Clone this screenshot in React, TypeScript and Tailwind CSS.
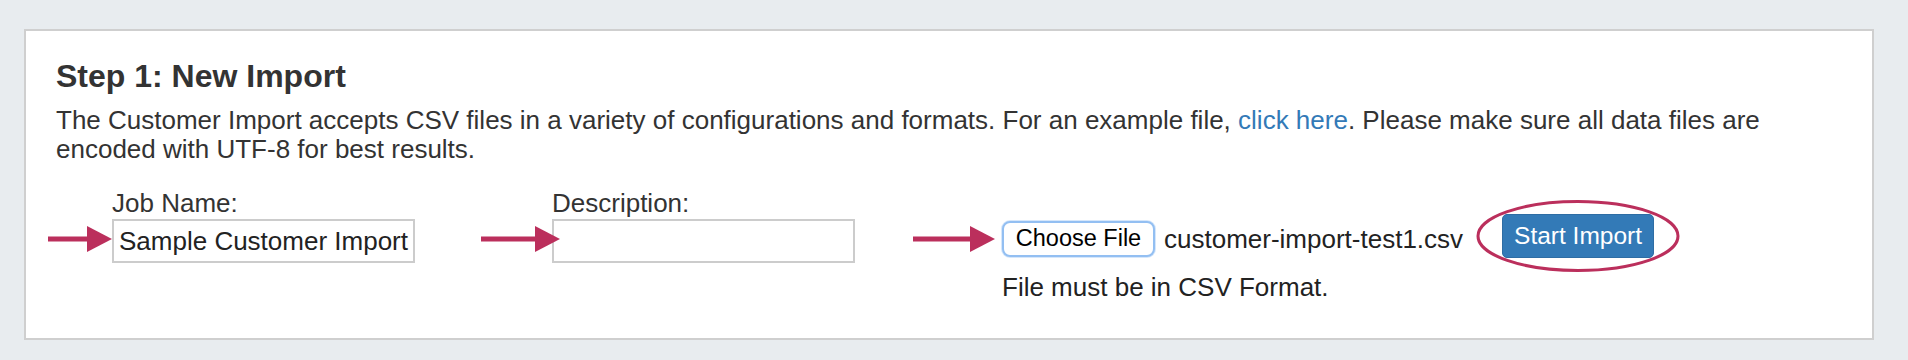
import React from 'react';

const ARROW = '#bb2f5c';

// Hand-drawn style annotation arrow pointing right
function Arrow({ width, className = '' }: { width: number; className?: string }) {
  return (
    <svg
      width={width}
      height={26}
      viewBox={`0 0 ${width} 26`}
      className={`relative z-10 shrink-0 ${className}`}
    >
      <rect x={0} y={10.5} width={width - 22} height={5} fill={ARROW} />
      <polygon points={`${width - 25},0 ${width},13 ${width - 25},26`} fill={ARROW} />
    </svg>
  );
}

export default function App() {
  return (
    <div
      className="h-[360px] w-full overflow-hidden bg-[#e8ecef] pt-[29px] pl-[24px] text-[#333333]"
      style={{ fontFamily: '"Liberation Sans", Arial, Helvetica, sans-serif' }}
    >
      <div className="h-[311px] w-[1850px] border-2 border-[#cfcfcf] bg-white pt-[28px] pl-[30px] pr-[30px]">
        <h2 className="text-[32px] font-bold leading-[35px]">Step 1: New Import</h2>
        <p className="mt-[12px] text-[26px] leading-[29px]">
          The Customer Import accepts CSV files in a variety of configurations and formats. For an example file,{' '}
          <a href="#" className="text-[#337ab7]">click here</a>. Please make sure all data files are encoded with
          UTF-8 for best results.
        </p>

        {/* form row */}
        <div className="-ml-2 mt-[25px] flex items-start">
          {/* job name */}
          <div className="flex items-end">
            <Arrow width={64} className="mb-[11px]" />
            <div className="flex flex-col">
              <label className="text-[26px] leading-[29px]">Job Name:</label>
              <div className="mt-px flex h-[44px] w-[303px] items-center overflow-hidden whitespace-nowrap border-2 border-[#cccccc] pl-[5px] text-[26px] leading-[29px] text-[#222]">
                Sample Customer Import
              </div>
            </div>
          </div>

          {/* description */}
          <div className="ml-[66px] flex items-end">
            <Arrow width={79} className="-mr-2 mb-[11px]" />
            <div className="flex flex-col">
              <label className="text-[26px] leading-[29px]">Description:</label>
              <div className="mt-px h-[44px] w-[303px] border-2 border-[#cccccc]" />
            </div>
          </div>

          {/* file upload */}
          <div className="ml-[58px] mt-[25px] flex flex-col">
            <div className="flex items-start">
              <Arrow width={82} className="mt-[12px]" />
              <button className="ml-[7px] mt-[7px] flex h-[36px] w-[153px] items-center justify-center rounded-[8px] border-2 border-[#93bff2] bg-white text-[23.5px] text-black shadow-[0_0_0_1px_#d6e7fb]">
                Choose File
              </button>
              <span className="ml-[9px] mt-[11px] whitespace-nowrap text-[26px] leading-[29px] text-[#222]">
                customer-import-test1.csv
              </span>
              <div className="relative ml-[39px]">
                <button className="flex h-[44px] w-[152px] items-center justify-center rounded-[5px] border border-[#2e6da4] bg-[#337ab7] text-[24.5px] text-white">
                  Start Import
                </button>
                <svg
                  width={204}
                  height={72}
                  viewBox="0 0 204 72"
                  className="pointer-events-none absolute left-[-26px] top-[-14px]"
                >
                  <ellipse cx={102} cy={36} rx={100} ry={34.5} fill="none" stroke={ARROW} strokeWidth={3} />
                </svg>
              </div>
            </div>
            <p className="ml-[89px] mt-[15px] text-[26px] leading-[29px] text-[#222]">File must be in CSV Format.</p>
          </div>
        </div>
      </div>
    </div>
  );
}
